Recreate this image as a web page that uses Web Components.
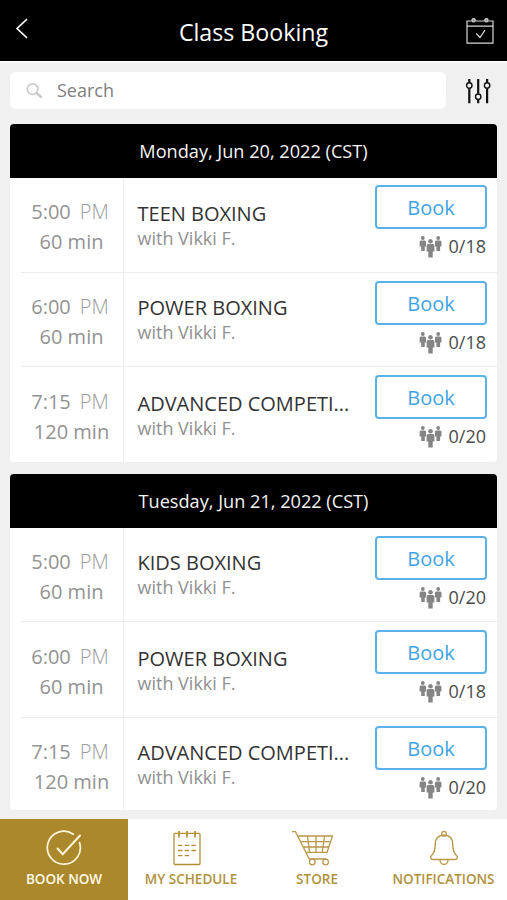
<!DOCTYPE html>
<html lang="en">
<head>
<meta charset="utf-8">
<title>Class Booking</title>
<style>
  body {
    margin: 0;
    background: #f0f0f0;
    font-family: "Open Sans", "Noto Sans", sans-serif;
  }
</style>
</head>
<body>
<booking-app></booking-app>

<script>
// Line icons shared by the bars and the rows
const icons = {
  back: `<svg width="14" height="22" viewBox="0 0 14 22"><path d="M12 1.2 2 10.500 12 19.800" fill="none" stroke="#fff" stroke-width="1.600"/></svg>`,
  calendar: `<svg width="28" height="28" viewBox="0 0 28 28" fill="none" stroke="#d8d8d8" stroke-width="1.200">
    <path d="M5.500 4H1v22.200h26V4h-4.700M9.700 4h8.800M1 9.200h26"/>
    <circle cx="7.600" cy="3.300" r="1.700" fill="#888"/><circle cx="20.400" cy="3.300" r="1.700" fill="#888"/>
    <path d="M10.300 16.500 14 20.500 19 13.200"/></svg>`,
  search: `<svg width="17" height="17" viewBox="0 0 17 17" fill="none" stroke="#cbcbcb"><circle cx="6.600" cy="7.100" r="5.300" stroke-width="1.700"/><path d="M10.700 11.200 14.700 14.800" stroke-width="2.700" stroke-linecap="round"/></svg>`,
  filter: `<svg width="26" height="26" viewBox="0 0 26 26" fill="none" stroke="#111">
    <path d="M4.300 1v3.700M4.300 10.300V25.200M13.200 1v14.700M13.200 21.300V25.200M22.100 1v3.700M22.100 10.300V25.200" stroke-width="2.200"/>
    <g stroke-width="1.400"><circle cx="4.300" cy="7.500" r="2.700"/><circle cx="13.200" cy="18.700" r="2.700"/><circle cx="22.100" cy="7.500" r="2.700"/></g></svg>`,
  people: `<svg width="23" height="22" viewBox="0 0 23 22" fill="#858585">
    <circle cx="3.800" cy="2" r="1.900"/><path d="M2 4.500h3.600a1.500 1.500 0 0 1 1.500 1.500v4.500H5.800V15H2.200V10.500H.6V6A1.500 1.500 0 0 1 2 4.500z"/>
    <circle cx="19.200" cy="2" r="1.900"/><path d="M17.400 4.500H21a1.500 1.500 0 0 1 1.500 1.500v4.500H21.100V15h-3.700V10.500H15.900V6a1.500 1.500 0 0 1 1.500-1.500z"/>
    <circle cx="11.500" cy="5.200" r="2.300"/><path d="M9.200 8.100h4.600a1.600 1.600 0 0 1 1.600 1.600v5.800H13.700v6H9.300v-6H7.600V9.700A1.600 1.600 0 0 1 9.200 8.100z"/></svg>`,
  check: `<svg width="36" height="36" viewBox="0 0 36 36" fill="none" stroke="#fff4dc" stroke-width="1.700" stroke-linecap="round"><path d="M27.300 4.200A16.500 16.500 0 1 0 33.500 12.500"/><path d="M11.500 18.500 16.700 24.200 34 5.500" stroke-width="2"/></svg>`,
  schedule: `<svg width="36" height="36" viewBox="0 0 36 36" fill="none" stroke="#b18f35" stroke-width="1.300">
    <rect x="5" y="3.300" width="26" height="31.200" rx="1"/>
    <path d="M10 1v6.500M18 1v6.500M26 1v6.500" stroke-width="1.700"/>
    <path d="M9 15.400h4.500M15.700 15.400h4.500M22.400 15.400h4.500M9 20.500h4.500M15.700 20.500h4.500M22.400 20.500h4.500M9 25.600h4.500M15.700 25.600h4.500" stroke-width="1.400"/></svg>`,
  cart: `<svg width="44" height="36" viewBox="0 0 44 36" fill="none" stroke="#b9984a" stroke-width="1.300">
    <path d="M1 1.700h3.500L18.300 29H35M7.200 6H41.500L36 22.300H15M9.800 11.700h29.700M12.500 17h25.300M16.500 6l2 16.300M25 6v16.300M33.500 6l-2.300 16.300"/>
    <circle cx="21.300" cy="32" r="2.800"/><circle cx="34.600" cy="32" r="2.800"/></svg>`,
  bell: `<svg width="30" height="36" viewBox="0 0 30 36" fill="none" stroke="#b9984a" stroke-width="1.400">
    <circle cx="15" cy="3.700" r="2.300"/>
    <path d="M15 5.200C8.500 5.200 6.300 9.500 6.300 14c0 7-1.300 9-3.600 11.200-2 2-1 4.300 1.300 4.300h22c2.300 0 3.300-2.300 1.300-4.300C25 23 23.700 21 23.700 14c0-4.500-2.200-8.800-8.700-8.800z" stroke-linejoin="round"/>
    <path d="M11 29.700a4 4.700 0 0 0 8 0"/></svg>`
};

class AppHeader extends HTMLElement {
  connectedCallback() {
    this.attachShadow({ mode: 'open' });
    this.shadowRoot.innerHTML = `
      <style>
        :host {
          display: grid;
          grid-template-columns: 60px 1fr 60px;
          box-sizing: border-box;
          height: 63px;
          background: #000;
          border-bottom: 2px solid #fafafa;
          color: #fff;
        }
        svg { display: block; }
        .back { padding: 18px 0 0 15px; }
        .title {
          padding: 17px 0 0 0;
          text-align: center;
          font-size: 23.200px;
          line-height: 31px;
        }
        .calendar { padding: 17px 0 0 19px; }
      </style>
      <div class="back">${icons.back}</div>
      <div class="title"><slot></slot></div>
      <div class="calendar">${icons.calendar}</div>
    `;
  }
}

class SearchBar extends HTMLElement {
  connectedCallback() {
    this.attachShadow({ mode: 'open' });
    this.shadowRoot.innerHTML = `
      <style>
        :host {
          display: flex;
          align-items: center;
          padding: 9px 16px 0 10px;
          gap: 19px;
        }
        svg { display: block; }
        .field {
          display: flex;
          align-items: center;
          flex: 1;
          height: 37px;
          box-sizing: border-box;
          padding-left: 16px;
          gap: 14px;
          background: #fff;
          border-radius: 6px;
          color: #808080;
          font-size: 18px;
          line-height: 34px;
        }
        .field span { padding-bottom: 2px; }
      </style>
      <div class="field">${icons.search}<span><slot></slot></span></div>
      ${icons.filter}
    `;
  }
}

class DayCard extends HTMLElement {
  connectedCallback() {
    this.attachShadow({ mode: 'open' });
    this.shadowRoot.innerHTML = `
      <style>
        :host {
          display: block;
          margin: 0 10px;
          background: #fff;
          border-radius: 4px;
          overflow: hidden;
        }
        .day {
          height: 54px;
          background: #000;
          color: #f4f4f4;
          text-align: center;
          font-size: 18.150px;
          line-height: 54px;
        }
      </style>
      <div class="day">${this.getAttribute('day')}</div>
      <slot></slot>
    `;
  }
}

class ClassRow extends HTMLElement {
  connectedCallback() {
    const get = name => this.getAttribute(name);
    this.attachShadow({ mode: 'open' });
    this.shadowRoot.innerHTML = `
      <style>
        :host {
          display: grid;
          grid-template-columns: 103px 1fr 122px;
          box-sizing: border-box;
          height: 95px;
          margin-left: 11px;
          border-bottom: 1px solid #ececec;
        }
        :host(:last-child) { border-bottom: 0; }
        svg { display: block; }
        .time {
          padding-top: var(--time-top, 19px);
          border-right: 1px solid #efefef;
          color: #939393;
          font-size: 20px;
          line-height: 30px;
          text-align: center;
          white-space: nowrap;
        }
        .start { padding-right: 4px; }
        .start span { margin-left: 9px; color: #9c9c9c; font-weight: 300; }
        .length { padding-right: 1px; }
        .info { padding: var(--info-top, 22px) 0 0 13.500px; }
        .name {
          color: #333;
          font-size: 20px;
          line-height: 28px;
          white-space: nowrap;
        }
        .coach { color: #919191; font-size: 18px; line-height: 20px; }
        .action { padding: var(--action-top, 7px) 10px 0 0; }
        button {
          display: block;
          box-sizing: border-box;
          width: 112px;
          height: 44px;
          padding: 1px 0 0;
          background: #fff;
          border: 2px solid #5bb2e8;
          border-radius: 4px;
          color: #3fa3e3;
          font: 20px/39px "Open Sans", sans-serif;
        }
        .spots {
          display: flex;
          justify-content: flex-end;
          gap: 7px;
          padding: 5px 1px 0 0;
          color: #4c4c4c;
          font-size: 18px;
          line-height: 25px;
        }
        .spots svg { padding-top: 2px; }
      </style>
      <div class="time">
        <div class="start">${get('time')}<span>PM</span></div>
        <div class="length">${get('length')} min</div>
      </div>
      <div class="info">
        <div class="name"><slot></slot></div>
        <div class="coach">with ${get('coach')}</div>
      </div>
      <div class="action">
        <button>Book</button>
        <div class="spots">${icons.people}<span>${get('spots')}</span></div>
      </div>
    `;
  }
}

class TabItem extends HTMLElement {
  connectedCallback() {
    this.attachShadow({ mode: 'open' });
    this.shadowRoot.innerHTML = `
      <style>
        :host {
          display: flex;
          flex-direction: column;
          align-items: center;
          padding-top: 11px;
          color: #b0913d;
          font-size: 13.500px;
          font-weight: 600;
          line-height: 20px;
          white-space: nowrap;
        }
        :host([active]) { background: #aa882b; color: #fff8e8; }
        svg { display: block; margin-bottom: 3px; }
        :host([icon="schedule"]) svg, :host([icon="cart"]) svg { margin-right: 8px; }
      </style>
      ${icons[this.getAttribute('icon')]}
      <span><slot></slot></span>
    `;
  }
}

class TabBar extends HTMLElement {
  connectedCallback() {
    this.attachShadow({ mode: 'open' });
    this.shadowRoot.innerHTML = `
      <style>
        :host {
          display: grid;
          grid-template-columns: 128px 126px 126px 127px;
          height: 81px;
          margin-top: auto;
          background: #fff;
        }
      </style>
      <slot></slot>
    `;
  }
}

class BookingApp extends HTMLElement {
  connectedCallback() {
    this.attachShadow({ mode: 'open' });
    this.shadowRoot.innerHTML = `
      <style>
        :host {
          display: flex;
          flex-direction: column;
          width: 507px;
          height: 900px;
          overflow: hidden;
        }
        .days {
          display: flex;
          flex-direction: column;
          gap: 12px;
          padding-top: 15px;
        }
      </style>
      <app-header>Class Booking</app-header>
      <search-bar>Search</search-bar>
      <div class="days">
        <day-card day="Monday, Jun 20, 2022 (CST)">
          <class-row time="5:00" length="60" coach="Vikki F." spots="0/18">TEEN BOXING</class-row>
          <class-row time="6:00" length="60" coach="Vikki F." spots="0/18" style="height: 94px; --info-top: 21px; --action-top: 8px">POWER BOXING</class-row>
          <class-row time="7:15" length="120" coach="Vikki F." spots="0/20" style="--time-top: 20px; --info-top: 23px; --action-top: 8px">ADVANCED COMPETI...</class-row>
        </day-card>
        <day-card day="Tuesday, Jun 21, 2022 (CST)">
          <class-row time="5:00" length="60" coach="Vikki F." spots="0/20" style="height: 94px; --info-top: 21px; --action-top: 8px">KIDS BOXING</class-row>
          <class-row time="6:00" length="60" coach="Vikki F." spots="0/18" style="height: 96px; --time-top: 20px; --info-top: 23px; --action-top: 8px">POWER BOXING</class-row>
          <class-row time="7:15" length="120" coach="Vikki F." spots="0/20" style="height: 92px; --time-top: 19px; --info-top: 21px; --action-top: 8px">ADVANCED COMPETI...</class-row>
        </day-card>
      </div>
      <tab-bar>
        <tab-item icon="check" active>BOOK NOW</tab-item>
        <tab-item icon="schedule">MY SCHEDULE</tab-item>
        <tab-item icon="cart">STORE</tab-item>
        <tab-item icon="bell">NOTIFICATIONS</tab-item>
      </tab-bar>
    `;
  }
}

customElements.define('app-header', AppHeader);
customElements.define('search-bar', SearchBar);
customElements.define('day-card', DayCard);
customElements.define('class-row', ClassRow);
customElements.define('tab-item', TabItem);
customElements.define('tab-bar', TabBar);
customElements.define('booking-app', BookingApp);
</script>
</body>
</html>
